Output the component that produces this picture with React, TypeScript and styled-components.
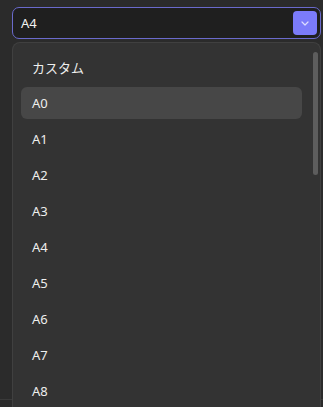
import React from "react";
import styled, { createGlobalStyle } from "styled-components";

const GlobalStyle = createGlobalStyle`
  html, body {
    margin: 0;
    height: 100%;
    overflow: hidden;
    background: #2b2b2b;
    font-family: "Noto Sans", "Noto Sans CJK JP", sans-serif;
  }
`;

const Page = styled.div`
  padding: 7px 2px 0 12px;
  display: flex;
  flex-direction: column;
  gap: 3px;
  height: 407px;
  box-sizing: border-box;
  background: linear-gradient(#2b2b2b 399px, #3a3a3a 399px, #3a3a3a 400px, #2b2b2b 400px);
`;

const SelectBox = styled.div`
  height: 32px;
  box-sizing: border-box;
  border: 1.5px solid #6a6acb;
  border-radius: 7px;
  background: #1f1f1f;
  display: flex;
  align-items: center;
  justify-content: space-between;
  padding: 0 3px 0 8px;
  color: #f2f2f2;
  font-size: 13px;
`;

const ChevronButton = styled.button`
  width: 24px;
  height: 24px;
  border: 0;
  border-radius: 4px;
  background: #7b7bfa;
  display: flex;
  align-items: center;
  justify-content: center;
  padding: 0;
`;

const Menu = styled.div`
  position: relative;
  flex: 1;
  border: 1px solid #404040;
  border-bottom: 0;
  border-radius: 8px 8px 0 0;
  background: #333333;
  overflow: hidden;
  padding: 8px 18px 0 8px;
`;

const Option = styled.div<{ $active?: boolean }>`
  height: 32px;
  margin: 0 0 4px;
  border-radius: 6px;
  padding: 0 11px;
  display: flex;
  align-items: center;
  font-size: 13px;
  color: #eeeeee;
  background: ${(p) => (p.$active ? "#474747" : "transparent")};
`;

// scroll thumb sits over the list
const Thumb = styled.div`
  position: absolute;
  top: 9px;
  right: 2px;
  width: 5px;
  height: 123px;
  border-radius: 3px;
  background: #5d5d5d;
`;

const options = ["カスタム", "A0", "A1", "A2", "A3", "A4", "A5", "A6", "A7", "A8"];

export default function App() {
  const hover = "A0";
  return (
    <>
      <GlobalStyle />
      <Page>
        <SelectBox>
          <span>A4</span>
          <ChevronButton aria-label="open">
            <svg width="8" height="5" viewBox="0 0 8 5" fill="none">
              <path d="M1 1l3 3 3-3" stroke="#dcdcff" strokeWidth="1.2" strokeLinecap="round" strokeLinejoin="round" />
            </svg>
          </ChevronButton>
        </SelectBox>
        <Menu>
          {options.map((o) => (
            <Option key={o} $active={o === hover}>
              {o}
            </Option>
          ))}
          <Thumb />
        </Menu>
      </Page>
    </>
  );
}
